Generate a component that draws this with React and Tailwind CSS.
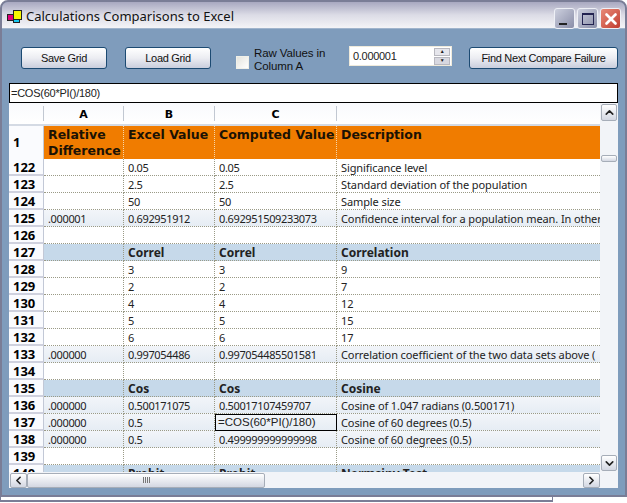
import React from "react";
import { ChevronUp, ChevronDown, ChevronLeft, ChevronRight, X } from "lucide-react";

const cols = ["w-[80px]", "w-[91px]", "w-[122px]", "w-[263px]"];

const rows = [
  ["122", "", "0.05", "0.05", "Significance level"],
  ["123", "", "2.5", "2.5", "Standard deviation of the population"],
  ["124", "", "50", "50", "Sample size"],
  ["125", ".000001", "0.692951912", "0.692951509233073", "Confidence interval for a population mean. In other"],
  ["126", "", "", "", ""],
  ["127", "", "Correl", "Correl", "Correlation", "band"],
  ["128", "", "3", "3", "9"],
  ["129", "", "2", "2", "7"],
  ["130", "", "4", "4", "12"],
  ["131", "", "5", "5", "15"],
  ["132", "", "6", "6", "17"],
  ["133", ".000000", "0.997054486", "0.997054485501581", "Correlation coefficient of the two data sets above ("],
  ["134", "", "", "", ""],
  ["135", "", "Cos", "Cos", "Cosine", "band"],
  ["136", ".000000", "0.500171075", "0.50017107459707", "Cosine of 1.047 radians (0.500171)"],
  ["137", ".000000", "0.5", "=COS(60*PI()/180)", "Cosine of 60 degrees (0.5)", "edit"],
  ["138", ".000000", "0.5", "0.499999999999998", "Cosine of 60 degrees (0.5)"],
  ["139", "", "", "", ""],
];

const XpButton = ({ className, children }) => (
  <button className={`h-[22px] shrink-0 rounded-[3px] border border-[#1c4a72] bg-gradient-to-b from-white via-[#ecedf2] to-[#c9cedd] text-[11px] tracking-[-0.32px] whitespace-nowrap text-[#111] font-['Liberation_Sans',sans-serif] ${className}`}>
    {children}
  </button>
);

const CaptionButton = ({ className, children }) => (
  <div className={`relative w-[21px] h-[21px] rounded-[3px] border border-[#eef0f6] flex items-center justify-center ${className}`}>
    {children}
  </div>
);

const ScrollButton = ({ className, children }) => (
  <div className={`flex items-center justify-center rounded-[2px] border border-[#a6adb8] bg-gradient-to-b from-white to-[#d3d7e2] text-[#222] ${className}`}>
    {children}
  </div>
);

const RowLabel = ({ children }) => (
  <div className="w-[35px] shrink-0 pl-[4px] bg-[#fafbfe] border-r border-r-[#c2c8d6] border-b-2 border-b-[#cfd1de] font-['Noto_Sans',sans-serif] font-bold text-[13px] leading-[16px] text-black">
    {children}
  </div>
);

const Row = ({ row }) => {
  const [num, a, b, c, d, kind] = row;
  const cells = [a, b, c, d];
  const band = kind === "band";
  let bg = "bg-white";
  if (band) bg = "bg-[#c6d9ea]";
  else if (a) bg = "bg-gradient-to-b from-[#f2f5f9] to-[#e6edf4]";
  return (
    <div className="flex h-[17px]">
      <RowLabel>{num}</RowLabel>
      {cells.map((text, i) => {
        const editing = kind === "edit" && i === 2;
        let size = "text-[11px] tracking-[-0.1px]";
        if (band) size = "text-[12px] font-bold";
        else if (i < 3) size = "text-[11px] tracking-[-0.35px]";
        return (
          <div
            key={i}
            className={`${cols[i]} shrink-0 overflow-hidden whitespace-nowrap text-[#222] ${bg} ${
              editing
                ? "border border-black pl-[2px] leading-[15px] text-[11.5px] font-['Liberation_Sans',sans-serif]"
                : `pl-[4px] leading-[17px] border-b border-dotted border-[#9a9a86] font-['Noto_Sans',sans-serif] ${size} ${i < 3 ? "border-r" : ""}`
            }`}
          >
            {text}
          </div>
        );
      })}
    </div>
  );
};

export default function App() {
  return (
    <div className="w-[627px] h-[503px] bg-white relative overflow-hidden font-['Liberation_Sans',sans-serif]">
      <div className="h-[497px] rounded-t-[8px] border-2 border-[#7a7d96] bg-[#7f9cbc] flex flex-col">
        <div className="h-[26px] shrink-0 rounded-t-[6px] bg-gradient-to-b from-[#a8a8c0] via-[#dcdce6] to-[#f4f4f7] flex items-center pl-[4px] pr-[4px]">
          <svg width="16" height="14" viewBox="0 0 16 14" className="shrink-0 mt-[4px]">
            <rect x="7.5" y="0.5" width="8" height="9" fill="#f6f600" stroke="#222" />
            <rect x="1.5" y="4.5" width="6" height="6" fill="#e0007a" stroke="#222" />
            <rect x="7.5" y="9.5" width="6" height="3" fill="#19c8f0" stroke="#222" />
          </svg>
          <span className="ml-[4px] mt-[3px] text-[13px] text-[#111] font-['Noto_Sans',sans-serif] flex-1 whitespace-nowrap">
            Calculations Comparisons to Excel
          </span>
          <div className="flex gap-[2px] mt-[7px]">
            <CaptionButton className="bg-gradient-to-br from-[#cdd0de] to-[#8a8ea8]">
              <div className="w-[8px] h-[2px] mt-[10px] mr-[3px] bg-[#222]" />
            </CaptionButton>
            <CaptionButton className="bg-gradient-to-br from-[#cdd0de] to-[#8a8ea8]">
              <div className="w-[12px] h-[12px] border border-[#222250] border-t-2" />
            </CaptionButton>
            <CaptionButton className="bg-gradient-to-br from-[#e88a78] to-[#c03a30]">
              <X size={18} strokeWidth={3.5} className="text-white" />
            </CaptionButton>
          </div>
        </div>
        <div className="flex-1 flex flex-col px-[7px] border-t border-[#a0b4cc]">
          <div className="h-[54px] shrink-0 flex items-start pt-[18px]">
            <XpButton className="ml-[12px] w-[86px]">Save Grid</XpButton>
            <XpButton className="ml-[18px] w-[86px]">Load Grid</XpButton>
            <div className="ml-[25px] mt-[9px] w-[13px] h-[13px] shrink-0 bg-gradient-to-br from-[#e4e4de] to-white border border-[#f0f0e8]" />
            <div className="ml-[5px] text-[11.5px] tracking-[-0.1px] leading-[13px] text-[#111] w-[90px] shrink-0">
              Raw Values in Column A
            </div>
            <div className="ml-[5px] -mt-[1px] w-[103px] h-[20px] shrink-0 bg-white border border-[#efeadb] flex items-center pl-[3px] pr-[1px] text-[11px] tracking-[-0.3px] text-[#222]">
              <span className="flex-1">0.000001</span>
              <div className="flex flex-col gap-[1px]">
                <div className="w-[16px] h-[8px] bg-[#e6e6ec] border border-[#b8b8c0] flex items-center justify-center text-[5px] leading-none">▲</div>
                <div className="w-[16px] h-[8px] bg-[#d8d8e0] border border-[#b8b8c0] flex items-center justify-center text-[5px] leading-none">▼</div>
              </div>
            </div>
            <XpButton className="ml-[17px] w-[149px]">Find Next Compare Failure</XpButton>
          </div>
          <div className="h-[20px] w-[609px] shrink-0 bg-white border border-black pl-[1px] text-[11px] tracking-[-0.25px] leading-[18px] text-[#222]">
            =COS(60*PI()/180)
          </div>
          <div className="w-[609px] h-[385px] shrink-0 relative bg-[#fafbfe] overflow-hidden">
            <div className="flex h-[21px] bg-gradient-to-b from-[#f9fafd] to-white font-['DejaVu_Sans',sans-serif] font-bold text-[11px] text-black">
              <div className="w-[35px] border-r border-[#c2c8d2] my-[3px]" />
              <div className="w-[80px] text-center leading-[18px] border-r border-[#c2c8d2] my-[3px]">A</div>
              <div className="w-[91px] text-center leading-[18px] border-r border-[#c2c8d2] my-[3px]">B</div>
              <div className="w-[122px] text-center leading-[18px] border-r border-[#c2c8d2] my-[3px]">C</div>
            </div>
            <div className="flex h-[35px] border-t-2 border-[#d4dae4]">
              <div className="w-[35px] shrink-0 pl-[4px] bg-[#fafbfe] font-['Noto_Sans',sans-serif] font-bold text-[13px] leading-[32px] text-black border-r border-[#c2c8d6]">1</div>
              {["Relative Difference", "Excel Value", "Computed Value", "Description"].map((text, i) => (
                <div
                  key={text}
                  className={`${cols[i]} shrink-0 pl-[4px] pt-[1px] bg-[#f07c00] font-['DejaVu_Sans',sans-serif] font-bold text-[12.5px] leading-[16px] text-[#1b1204] ${i < 3 ? "border-r border-dotted border-[#f5d5a8]" : ""}`}
                >
                  {text}
                </div>
              ))}
            </div>
            {rows.map((row) => (
              <Row key={row[0]} row={row} />
            ))}
            <div className="flex h-[17px]">
              <RowLabel>140</RowLabel>
              {["", "Probit", "Probit", "Normsinv Test"].map((text, i) => (
                <div key={i} className={`${cols[i]} shrink-0 pl-[4px] bg-[#c6d9ea] font-['Noto_Sans',sans-serif] font-bold text-[12px] leading-[17px] text-[#222] whitespace-nowrap ${i < 3 ? "border-r border-dotted border-[#9a9a86]" : ""}`}>
                  {text}
                </div>
              ))}
            </div>

            {/* vertical scrollbar */}
            <div className="absolute right-0 top-0 bottom-0 w-[18px] bg-[#f2f4f8] flex flex-col">
              <ScrollButton className="w-[16px] h-[17px] ml-[1px] mt-[1px]">
                <ChevronUp size={13} strokeWidth={3} />
              </ScrollButton>
              <div className="w-[16px] h-[7px] ml-[1px] mt-[34px] rounded-[2px] border border-[#a6adb8] bg-gradient-to-b from-white to-[#d3d7e2]" />
              <div className="flex-1" />
              <ScrollButton className="w-[16px] h-[16px] ml-[1px] mb-[17px]">
                <ChevronDown size={13} strokeWidth={3} />
              </ScrollButton>
            </div>

            {/* horizontal scrollbar */}
            <div className="absolute left-0 right-[18px] bottom-0 h-[16px] bg-[#f2f4f8] flex items-center pl-[1px]">
              <ScrollButton className="w-[17px] h-[15px] shrink-0">
                <ChevronLeft size={13} strokeWidth={3} />
              </ScrollButton>
              <div className="w-[238px] h-[15px] shrink-0 rounded-[2px] border border-[#a6adb8] bg-gradient-to-b from-white to-[#d3d7e2] flex items-center justify-center gap-[1px]">
                <div className="w-[1px] h-[6px] bg-[#777]" />
                <div className="w-[1px] h-[6px] bg-[#777]" />
                <div className="w-[1px] h-[6px] bg-[#777]" />
                <div className="w-[1px] h-[6px] bg-[#777]" />
              </div>
              <div className="flex-1" />
              <ScrollButton className="w-[17px] h-[15px] shrink-0">
                <ChevronRight size={13} strokeWidth={3} />
              </ScrollButton>
            </div>
          </div>
        </div>
      </div>
      <div className="absolute left-0 top-[497px] w-[553px] h-[5px] border-b-2 border-x border-[#7a7d96] bg-white" />
    </div>
  );
}
